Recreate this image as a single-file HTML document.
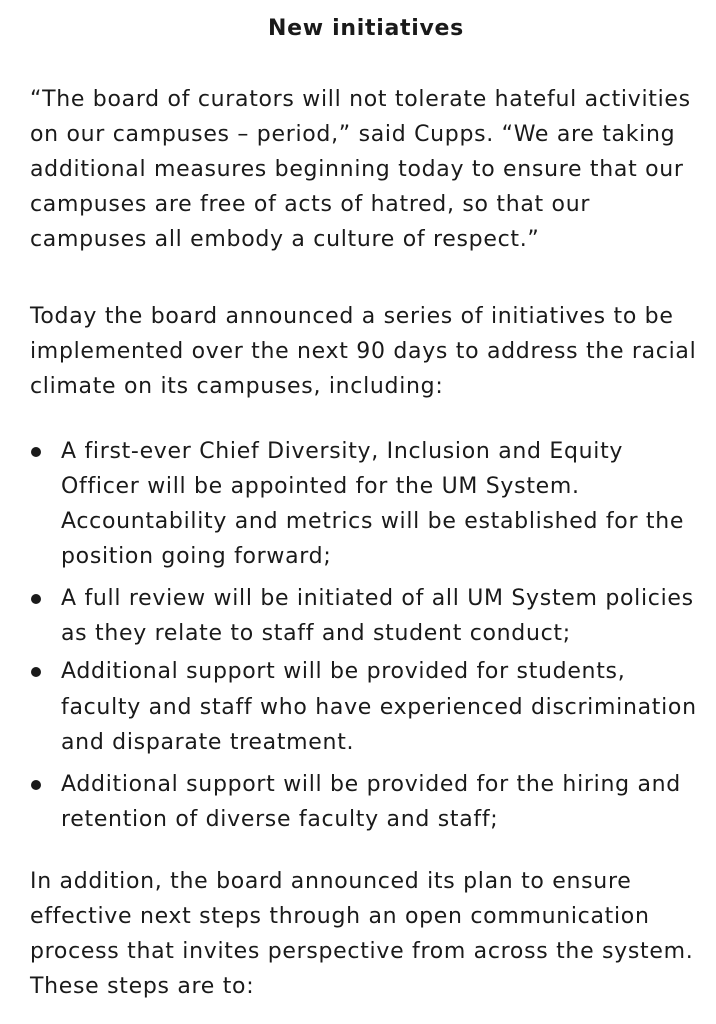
<!DOCTYPE html>
<html><head><meta charset="utf-8"><style>
body{margin:0;width:716px;height:1024px;background:#fff;overflow:hidden;font-family:"DejaVu Sans","Liberation Sans",sans-serif;color:#1a1a1a;font-size:22px;letter-spacing:0.7px;}
.l{position:absolute;white-space:nowrap;line-height:35px;height:35px;}
.b{position:absolute;left:31px;width:10px;height:10px;border-radius:50%;background:#1a1a1a;}
</style></head><body>
<div class="l" style="left:8px;width:716px;text-align:center;top:11px;font-weight:bold;">New initiatives</div>
<div class="l" style="left:30px;top:82px">“The board of curators will not tolerate hateful activities</div>
<div class="l" style="left:30px;top:117px">on our campuses – period,” said Cupps. “We are taking</div>
<div class="l" style="left:30px;top:152px">additional measures beginning today to ensure that our</div>
<div class="l" style="left:30px;top:187px">campuses are free of acts of hatred, so that our</div>
<div class="l" style="left:30px;top:222px">campuses all embody a culture of respect.”</div>
<div class="l" style="left:30px;top:299px">Today the board announced a series of initiatives to be</div>
<div class="l" style="left:30px;top:334px">implemented over the next 90 days to address the racial</div>
<div class="l" style="left:30px;top:369px">climate on its campuses, including:</div>
<div class="b" style="top:447px"></div>
<div class="l" style="left:61px;top:434px">A first-ever Chief Diversity, Inclusion and Equity</div>
<div class="l" style="left:61px;top:469px">Officer will be appointed for the UM System.</div>
<div class="l" style="left:61px;top:504px">Accountability and metrics will be established for the</div>
<div class="l" style="left:61px;top:539px">position going forward;</div>
<div class="b" style="top:594px"></div>
<div class="l" style="left:61px;top:581px">A full review will be initiated of all UM System policies</div>
<div class="l" style="left:61px;top:616px">as they relate to staff and student conduct;</div>
<div class="b" style="top:667px"></div>
<div class="l" style="left:61px;top:654px">Additional support will be provided for students,</div>
<div class="l" style="left:61px;top:690px">faculty and staff who have experienced discrimination</div>
<div class="l" style="left:61px;top:725px">and disparate treatment.</div>
<div class="b" style="top:780px"></div>
<div class="l" style="left:61px;top:767px">Additional support will be provided for the hiring and</div>
<div class="l" style="left:61px;top:802px">retention of diverse faculty and staff;</div>
<div class="l" style="left:30px;top:864px">In addition, the board announced its plan to ensure</div>
<div class="l" style="left:30px;top:899px">effective next steps through an open communication</div>
<div class="l" style="left:30px;top:934px">process that invites perspective from across the system.</div>
<div class="l" style="left:30px;top:969px">These steps are to:</div>
</body></html>
